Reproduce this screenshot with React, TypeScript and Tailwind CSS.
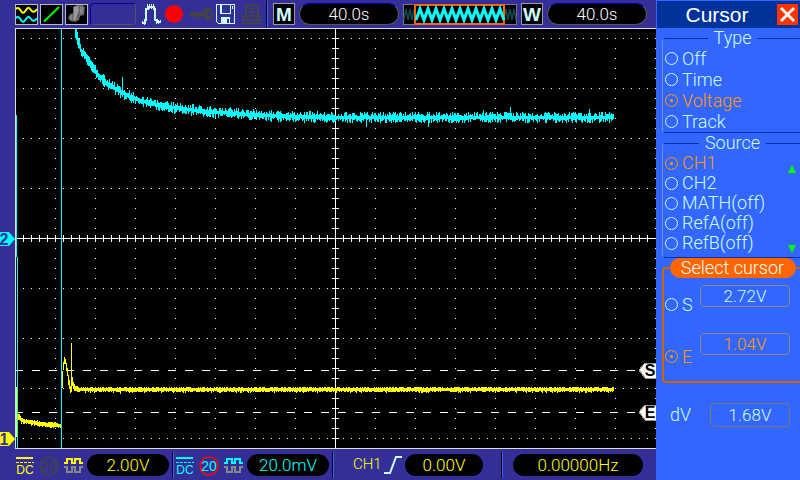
import React, { useState } from "react";
import clsx from "clsx";

type Point = [number, number];

// small deterministic noise so the traces look the same on every render
const noise = (n: number) => {
  const v = Math.sin(n * 127.1 + 11.7) * 43758.5453;
  return v - Math.floor(v);
};

const interpolate = (points: Point[], x: number) => {
  const i = points.findIndex(([px]) => px >= x);
  if (i <= 0) return points[0][1];
  const [x0, y0] = points[i - 1];
  const [x1, y1] = points[i];
  return y0 + ((y1 - y0) * (x - x0)) / (x1 - x0);
};

const range = (from: number, to: number, step: number) => {
  const out: number[] = [];
  for (let i = from; i <= to; i += step) out.push(i);
  return out;
};

const buildTrace = (points: Point[], up: number, down: number, seed: number) =>
  range(points[0][0], points[points.length - 1][0] - 1, 1)
    .map((x) => {
      const y = interpolate(points, x);
      const next = interpolate(points, x + 1);
      const top = Math.round(y - 1 - Math.pow(noise(x + seed), 1.5) * up);
      const bottom = Math.round(
        Math.max(next, y) + 2 + Math.pow(noise(x * 3 + seed), 1.5) * down
      );
      return `M${x + 0.5} ${top}V${bottom}`;
    })
    .join("");

const CH2_POINTS: Point[] = [
  [75, 28], [78, 40], [81, 50], [87, 58], [93, 68], [98, 74], [107, 83],
  [115, 88], [122, 92], [130, 96], [140, 100], [152, 103], [175, 107.5],
  [200, 110.5], [220, 112], [250, 114], [290, 116], [330, 117], [614, 117],
];

const CH1_START: Point[] = [
  [18, 415], [22, 420], [32, 422], [44, 424], [61, 425],
];

const CH1_POINTS: Point[] = [[73, 383], [75, 388], [78, 389], [614, 389]];

const CH2_TRACE = buildTrace(CH2_POINTS, 4.5, 4.5, 0);
const CH1_TRACE =
  buildTrace(CH1_START, 1.8, 1.8, 40) + buildTrace(CH1_POINTS, 1.4, 1.7, 90);

const COLUMNS = range(55, 615, 40).filter((x) => x !== 335);
const ROWS = [38, 88, 138, 188, 288, 338, 388, 438];

const Graticule = () => (
  <g fill="#fff">
    {ROWS.map((y) =>
      range(23, 647, 8).map((x) => (
        <rect key={`r${x}-${y}`} x={x} y={y} width="1" height="1" />
      ))
    )}
    {[...COLUMNS, 655].map((x) =>
      range(38, 438, 10).map((y) => (
        <rect key={`c${x}-${y}`} x={x} y={y} width="1" height="1" />
      ))
    )}
    <rect x="335" y="28" width="1" height="420" />
    <rect x="16" y="238" width="640" height="1" />
    {range(38, 438, 10).map((y) => (
      <rect key={y} x="332" y={y} width="7" height="1" />
    ))}
    {range(23, 647, 8).map((x) => (
      <rect key={x} x={x} y="235" width="1" height="7" />
    ))}
  </g>
);

const CursorFlag = ({ y, name }: { y: number; name: string }) => (
  <g>
    <path
      d={`M639 ${y}L645 ${y - 7}H656V${y + 8}H645Z`}
      fill="#fff"
      stroke="#999"
      strokeWidth="1"
    />
    <text
      x="650"
      y={y + 6}
      textAnchor="middle"
      className="font-['Liberation_Sans'] text-[16px] font-bold"
    >
      {name}
    </text>
  </g>
);

const Plot = () => (
  <svg
    viewBox="15 28 641 421"
    className="block min-w-0 flex-1 bg-black"
    shapeRendering="crispEdges"
    role="img"
    aria-label="CH1, CH2"
  >
    <Graticule />
    <path
      d="M15 370.5H639M15 412.5H639"
      stroke="#fff"
      strokeDasharray="8 9"
    />
    <path d={CH2_TRACE} stroke="#0ff" />
    <path
      d="M16.5 115V257M17.5 257V448M61.5 29V448M122.5 77V90M366.5 118V127M428.5 118V127M510.5 107V118M589.5 109V118M483.5 110V118"
      stroke="#0ff"
    />
    <path d={CH1_TRACE} stroke="#ff0" />
    <path
      d="M16.5 387V437M62.5 371V388M63.5 362V370M64.5 357V364M65.5 359V364M66.5 363V370M67.5 368V376M68.5 375V385M69.5 380V389M70.5 386V393M71.5 343V392M72.5 377V386M120.5 390V394"
      stroke="#ff0"
    />
    <path d="M15 28.5H656M15.5 28V449M15 448.5H656" fill="none" stroke="#ddd" />
    <CursorFlag y={370} name="S" />
    <CursorFlag y={412} name="E" />
  </svg>
);

const ChannelFlag = ({
  y,
  name,
  color,
}: {
  y: number;
  name: string;
  color: string;
}) => (
  <g>
    <path d={`M0 ${y - 7}H9L15 ${y}L9 ${y + 7}H0Z`} fill={color} />
    <text
      x="4"
      y={y + 6}
      textAnchor="middle"
      fill="#342f98"
      className="font-['Liberation_Sans'] text-[16px] font-bold"
    >
      {name}
    </text>
  </g>
);

const Readout = ({
  children,
  className,
}: {
  children: React.ReactNode;
  className?: string;
}) => (
  <output
    className={clsx(
      "flex h-[22px] shrink-0 items-center justify-center rounded-full bg-black text-[17px] leading-[22px]",
      className
    )}
  >
    {children}
  </output>
);

const Separator = ({ className }: { className?: string }) => (
  <span
    className={clsx(
      "h-[26px] w-[2px] shrink-0 border-l border-black bg-[#3366ff]",
      className
    )}
  />
);

const Badge = ({ children }: { children: React.ReactNode }) => (
  <span className="flex h-[22px] w-[22px] shrink-0 items-center justify-center border border-[#999] bg-black font-['Liberation_Sans'] text-[19px] leading-none font-bold text-[#ccffff]">
    {children}
  </span>
);

const zigzag = (from: number, to: number, period: number) =>
  `M${from} 16` +
  range(from, to - period, period)
    .map((x) => `L${x + period / 2} 5L${x + period} 16`)
    .join("");

const TopIcons = () => (
  <>
    <svg className="h-[21px] w-[23px] shrink-0" viewBox="0 0 23 21">
      <rect x=".5" y=".5" width="22" height="20" stroke="#bbb" />
      <g fill="none" strokeWidth="2">
        <path stroke="#ff0" d="M1 5C3 3 4 4 6 7S9 9 11 6S14 3 16 6S20 8 22 5" />
        <path stroke="#0ff" d="M1 14C3 12 4 13 6 16S9 18 11 15S14 12 16 15S20 17 22 14" />
      </g>
    </svg>
    <svg className="h-[21px] w-[23px] shrink-0" viewBox="0 0 23 21">
      <rect x=".5" y=".5" width="22" height="20" stroke="#bbb" />
      <path d="M4 17.500L19 3" stroke="#0f0" strokeWidth="2" />
    </svg>
    <svg className="h-[21px] w-[23px] shrink-0" viewBox="0 0 23 21">
      <rect x=".5" y=".5" width="22" height="20" stroke="#bbb" />
      <path d="M8 3L12 1H18L20 4L19 11L15 12L14 16L10 18L5 17L3 14L5 10L8 9Z" fill="#666" />
      <path d="M9 3L13 2L14 6L12 11L11 16L8 16L9 10Z" fill="#999" />
      <path d="M15 3L18 3L18 9L15 10ZM5 12L7 11L7 16L5 15Z" fill="#858585" />
    </svg>
    <span className="h-[22px] w-[46px] shrink-0 rounded-sm border border-[#555] border-t-[#000099] border-l-[#000099]" />
    <svg
      className="ml-[3px] h-[21px] w-[21px] shrink-0"
      viewBox="0 0 21 21"
      fill="none"
      stroke="#ccffff"
      shapeRendering="crispEdges"
    >
      <path strokeWidth="2" d="M1 19H4V16H5V5H7V3H13V5H14V16H16V18H19" />
      <path d="M1.500 20V17M3.500 21V17M6.500 4V0M8.500 5V0M10.500 5V0M12.500 4V0M15.500 20V16M17.500 20V16M19.500 19V16" />
    </svg>
    <span className="ml-px h-[18px] w-[18px] shrink-0 rounded-full bg-[#ff0000]" />
    <svg className="ml-1 h-[14px] w-[24px] shrink-0" viewBox="0 0 24 14" fill="#444">
      <path
        fillRule="evenodd"
        d="M0 7L2 5H14C14 3 16 1 19 1C22 1 24 4 24 7S22 13 19 13C16 13 15 11 14 9H12V12H10V9H8V12H6V9H2ZM20 5A2 2 0 1 0 20 9A2 2 0 1 0 20 5Z"
      />
    </svg>
    <svg className="h-[21px] w-[21px] shrink-0" viewBox="0 0 21 21" shapeRendering="crispEdges">
      <path d="M1.500 .5H19.500V19.500H3.500L1.500 17.500Z" fill="#342f98" stroke="#ccffff" />
      <path d="M5.500 .5H15.500V9.500H5.500Z" fill="#342f98" stroke="#ccffff" />
      <path d="M6 13H15V20H6ZM5 1H7V10H5Z" fill="#ccffff" />
      <path d="M12 15H14V19H12Z" fill="#342f98" />
      <path d="M17.500 2V5" stroke="#ccffff" />
    </svg>
    <svg
      className="ml-[3px] h-[21px] w-[21px] shrink-0"
      viewBox="0 0 21 21"
      fill="none"
      stroke="#444"
      strokeWidth="2"
      shapeRendering="crispEdges"
    >
      <path d="M5 11V1H15L17 3V11M8 5H14M8 8H14M2 12H19V16H2ZM1 19H20" />
    </svg>
  </>
);

const TopBar = () => (
  <header className="flex h-[28px] items-center gap-[2px] pl-[15px] text-white">
    <TopIcons />
    <Separator className="ml-[2px]" />
    <span className="ml-[3px] flex items-center gap-1">
      <Badge>M</Badge>
      <Readout className="w-[100px] border border-[#555] border-t-[#000099]">
        40.0s
      </Readout>
      <svg className="h-[21px] w-[114px] shrink-0" viewBox="0 0 114 21">
        <rect x=".5" y=".5" width="113" height="20" stroke="#777" />
        <path d={zigzag(1, 14, 4)} fill="none" stroke="#114850" strokeWidth="1.5" />
        <path d={zigzag(101, 114, 4)} fill="none" stroke="#114850" strokeWidth="1.5" />
        <rect x="12" y="1" width="89" height="19" fill="#000" stroke="#ff6600" strokeWidth="2" />
        <path d={zigzag(13, 101, 8)} fill="none" stroke="#0ff" strokeWidth="3" />
      </svg>
      <Badge>W</Badge>
      <Readout className="w-[100px] border border-[#555] border-t-[#000099]">
        40.0s
      </Readout>
    </span>
  </header>
);

const ChannelSettings = ({
  color,
  limit,
}: {
  color: string;
  limit: boolean;
}) => (
  <svg className="h-[22px] w-[68px] shrink-0" viewBox="0 0 68 22">
    <path d="M0 4H17" stroke={color} strokeWidth="2" />
    <path d="M0 8.500H18" stroke={color} strokeDasharray="3 1" />
    <text
      x="9"
      y="20"
      textAnchor="middle"
      fill={color}
      className="font-['Liberation_Sans'] text-[12px]"
    >
      DC
    </text>
    <circle
      cx="33"
      cy="12"
      r="9"
      fill="none"
      stroke={limit ? "#f00" : "#444"}
      strokeWidth="1.6"
    />
    <text
      x="33"
      y="17"
      textAnchor="middle"
      fill={limit ? "#0ff" : "#444"}
      className="font-['Liberation_Sans'] text-[14px]"
    >
      20
    </text>
    <g fill="none" strokeWidth="1.6" shapeRendering="crispEdges">
      <path stroke={color} d="M48 9H51V5H56V9H59V5H64V9H67" />
      <path stroke="#888" d="M48 13H51V18H56V13H59V18H64V13H67" />
    </g>
  </svg>
);

const BottomBar = () => (
  <footer className="flex h-[31px] items-center pl-[16px]">
    <ChannelSettings color="#ffff00" limit={false} />
    <Readout className="ml-[3px] w-[82px] text-[#ffff00]">2.00V</Readout>
    <Separator className="ml-[3px]" />
    <span className="ml-[2px] flex items-center">
      <ChannelSettings color="#00ffff" limit />
    </span>
    <Readout className="ml-[3px] w-[82px] text-[#00ffff]">20.0mV</Readout>
    <Separator className="ml-[3px]" />
    <span className="ml-[19px] w-[31px] text-[15px] text-[#ffff00]">CH1</span>
    <svg className="h-[20px] w-[18px] shrink-0" viewBox="0 0 18 20">
      <path d="M0 18H6L12 2H18" fill="none" stroke="#ccffff" strokeWidth="2" />
    </svg>
    <Readout className="ml-[3px] w-[78px] text-[#ffff00]">0.00V</Readout>
    <Separator className="ml-[18px]" />
    <Readout className="ml-[10px] w-[130px] text-[#ffff00]">0.00000Hz</Readout>
  </footer>
);

const Radio = ({
  name,
  label,
  checked,
  onChange,
  className,
}: {
  name: string;
  label: string;
  checked: boolean;
  onChange: () => void;
  className?: string;
}) => (
  <label
    className={clsx(
      "flex items-center gap-1",
      checked ? "text-[#ff9900]" : "text-[#ccffff]",
      className
    )}
  >
    <input
      type="radio"
      name={name}
      checked={checked}
      onChange={onChange}
      className="grid h-[13px] w-[13px] shrink-0 appearance-none place-items-center rounded-full border border-current before:h-[3px] before:w-[3px] before:rounded-full checked:before:bg-current"
    />
    {label}
  </label>
);

const GROUP =
  "rounded-l border border-r-0 border-[#003399] border-l-[#6699cc] pl-[2px]";

const TYPES = ["Off", "Time", "Voltage", "Track"];
const SOURCES = ["CH1", "CH2", "MATH(off)", "RefA(off)", "RefB(off)"];

const CursorPanel = () => {
  const [type, setType] = useState("Voltage");
  const [source, setSource] = useState("CH1");
  const [cursor, setCursor] = useState("E");

  return (
    <aside className="w-[144px] shrink-0 bg-[#3366ff] pl-px text-[18px] leading-[20px] text-[#ccffff]">
      <div className="flex h-[28px] items-center border-t border-[#3366ff] bg-[#003399] pr-[2px]">
        <h1 className="flex-1 text-center font-['Liberation_Sans'] text-[21px] font-normal text-white">
          Cursor
        </h1>
        <button
          type="button"
          aria-label="Close"
          className="flex h-[21px] w-[21px] items-center justify-center bg-[#ff3300]"
        >
          <svg className="h-[15px] w-[15px]" viewBox="0 0 15 15">
            <path d="M1 1L14 14M14 1L1 14" stroke="#fff" strokeWidth="2.800" />
          </svg>
        </button>
      </div>

      <div className="pl-[5px]">
        <fieldset className={GROUP}>
          <legend className="mx-auto px-[6px]">Type</legend>
          {TYPES.map((name) => (
            <Radio
              key={name}
              name="type"
              label={name}
              checked={type === name}
              onChange={() => setType(name)}
              className="h-[21px]"
            />
          ))}
        </fieldset>

        <fieldset className={clsx(GROUP, "pb-1")}>
          <legend className="mx-auto px-[6px]">Source</legend>
          <div className="flex justify-between pr-1">
            <div>
              {SOURCES.map((name) => (
                <Radio
                  key={name}
                  name="source"
                  label={name}
                  checked={source === name}
                  onChange={() => setSource(name)}
                  className="h-[20px]"
                />
              ))}
            </div>
            <div className="flex flex-col justify-between pt-3">
              <button type="button" aria-label="Up">
                <svg className="h-[8px] w-[8px]" viewBox="0 0 8 8">
                  <path d="M4 0L8 8H0Z" fill="#0f0" />
                </svg>
              </button>
              <button type="button" aria-label="Down">
                <svg className="h-[8px] w-[8px]" viewBox="0 0 8 8">
                  <path d="M4 8L8 0H0Z" fill="#0f0" />
                </svg>
              </button>
            </div>
          </div>
        </fieldset>

        <fieldset className="rounded-l border-2 border-r-0 border-[#cc6600] pb-[18px] pl-px">
          <legend className="mx-auto w-[126px] rounded-full bg-[#ff6600] text-center text-white">
            Select cursor
          </legend>
          <div className="mt-[7px] flex h-[26px] justify-between pr-[10px]">
            <Radio
              name="cursor"
              label="S"
              checked={cursor === "S"}
              onChange={() => setCursor("S")}
              className="h-[13px] self-end"
            />
            <input
              aria-label="S"
              readOnly
              value="2.72V"
              className="h-[22px] w-[90px] rounded border border-[#888] text-center text-[17px] text-[#ccffff]"
            />
          </div>
          <div className="mt-[22px] flex h-[30px] justify-between pr-[10px]">
            <Radio
              name="cursor"
              label="E"
              checked={cursor === "E"}
              onChange={() => setCursor("E")}
              className="h-[13px] self-end"
            />
            <input
              aria-label="E"
              readOnly
              value="1.04V"
              className="h-[22px] w-[90px] rounded border border-[#888] text-center text-[17px] text-[#ff9900]"
            />
          </div>
        </fieldset>

        <div className="mt-[20px] flex items-center justify-between pr-[10px] pl-[8px]">
          <label htmlFor="delta">dV</label>
          <input
            id="delta"
            readOnly
            value="1.68V"
            className="h-[24px] w-[80px] rounded border border-[#777] text-center text-[17px] text-[#ccffff]"
          />
        </div>
      </div>
    </aside>
  );
};

const App = () => {
  return (
    <div className="flex min-h-screen bg-[#342f98] font-['Roboto',sans-serif] font-light">
      <main className="flex min-w-0 flex-1 flex-col">
        <TopBar />
        <div className="flex">
          <svg className="block w-[15px] shrink-0" viewBox="0 28 15 421">
            <ChannelFlag y={239} name="2" color="#00ffff" />
            <ChannelFlag y={439} name="1" color="#ffff00" />
          </svg>
          <Plot />
        </div>
        <BottomBar />
      </main>
      <CursorPanel />
    </div>
  );
};

export default App;
